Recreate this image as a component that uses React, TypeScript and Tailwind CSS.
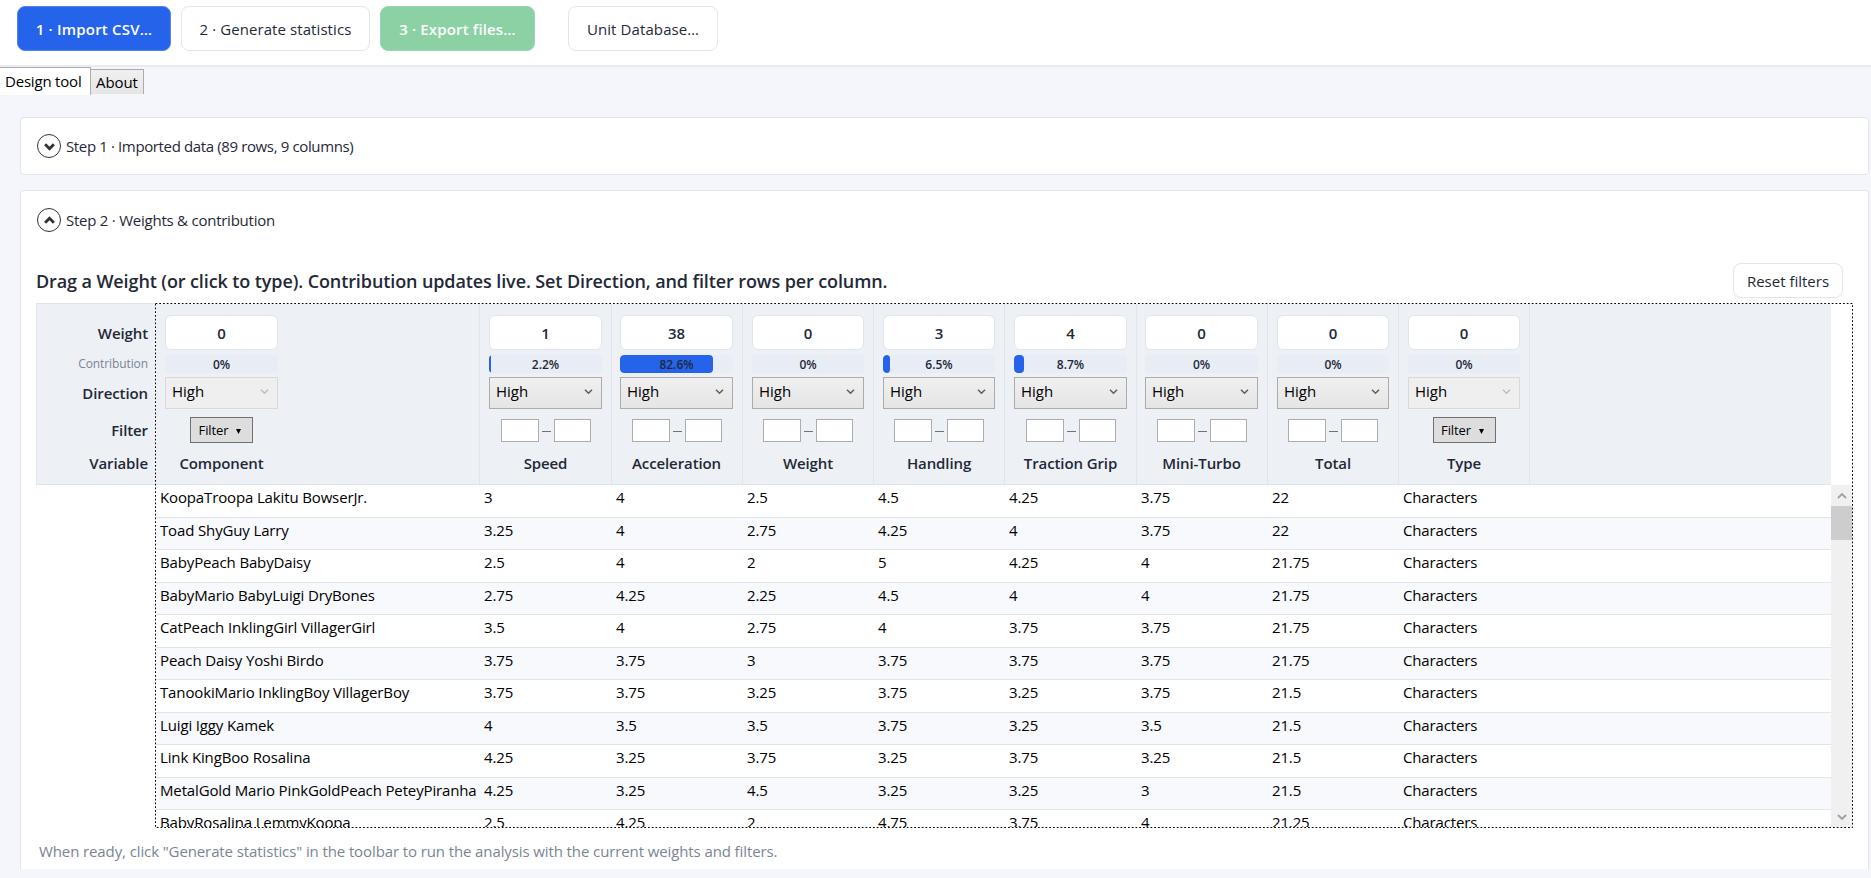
import type { ReactNode } from 'react'

interface Column {
  name: string
  weight: string
  share: number
  width: string
  inset: string
  box: string
  kind: 'range' | 'list'
}

const COLUMNS: Column[] = [
  { name: 'Component', weight: '0', share: 0, width: 'w-[324px]', inset: 'pl-[9px]', box: 'w-[113px]', kind: 'list' },
  { name: 'Speed', weight: '1', share: 2.2, width: 'w-[132px]', inset: 'pl-[9px]', box: 'w-[113px]', kind: 'range' },
  { name: 'Acceleration', weight: '38', share: 82.6, width: 'w-[131px]', inset: 'pl-2', box: 'w-[113px]', kind: 'range' },
  { name: 'Weight', weight: '0', share: 0, width: 'w-[131px]', inset: 'pl-[9px]', box: 'w-[112px]', kind: 'range' },
  { name: 'Handling', weight: '3', share: 6.5, width: 'w-[131px]', inset: 'pl-[9px]', box: 'w-[112px]', kind: 'range' },
  { name: 'Traction Grip', weight: '4', share: 8.7, width: 'w-[132px]', inset: 'pl-[9px]', box: 'w-[113px]', kind: 'range' },
  { name: 'Mini-Turbo', weight: '0', share: 0, width: 'w-[131px]', inset: 'pl-2', box: 'w-[113px]', kind: 'range' },
  { name: 'Total', weight: '0', share: 0, width: 'w-[131px]', inset: 'pl-[9px]', box: 'w-[112px]', kind: 'range' },
  { name: 'Type', weight: '0', share: 0, width: 'w-[131px]', inset: 'pl-[9px]', box: 'w-[112px]', kind: 'list' },
]

const ROWS: string[][] = [
  ['KoopaTroopa Lakitu BowserJr.', '3', '4', '2.5', '4.5', '4.25', '3.75', '22', 'Characters'],
  ['Toad ShyGuy Larry', '3.25', '4', '2.75', '4.25', '4', '3.75', '22', 'Characters'],
  ['BabyPeach BabyDaisy', '2.5', '4', '2', '5', '4.25', '4', '21.75', 'Characters'],
  ['BabyMario BabyLuigi DryBones', '2.75', '4.25', '2.25', '4.5', '4', '4', '21.75', 'Characters'],
  ['CatPeach InklingGirl VillagerGirl', '3.5', '4', '2.75', '4', '3.75', '3.75', '21.75', 'Characters'],
  ['Peach Daisy Yoshi Birdo', '3.75', '3.75', '3', '3.75', '3.75', '3.75', '21.75', 'Characters'],
  ['TanookiMario InklingBoy VillagerBoy', '3.75', '3.75', '3.25', '3.75', '3.25', '3.75', '21.5', 'Characters'],
  ['Luigi Iggy Kamek', '4', '3.5', '3.5', '3.75', '3.25', '3.5', '21.5', 'Characters'],
  ['Link KingBoo Rosalina', '4.25', '3.25', '3.75', '3.25', '3.75', '3.25', '21.5', 'Characters'],
  ['MetalGold Mario PinkGoldPeach PeteyPiranha', '4.25', '3.25', '4.5', '3.25', '3.25', '3', '21.5', 'Characters'],
  ['BabyRosalina LemmyKoopa', '2.5', '4.25', '2', '4.75', '3.75', '4', '21.25', 'Characters'],
]

function Chevron({ up, className }: { up?: boolean; className?: string }) {
  return (
    <svg viewBox="0 0 10 8" className={className} fill="none" stroke="currentColor">
      <path d={up ? 'M1 6 L5 2 L9 6' : 'M1 2 L5 6 L9 2'} />
    </svg>
  )
}

function ExpanderHeader({ open, children }: { open?: boolean; children: ReactNode }) {
  return (
    <div className="flex items-center gap-[5px]">
      <span className="flex size-6 items-center justify-center rounded-full border-[1.5px] border-[#333]">
        <Chevron up={open} className="h-[9px] w-[11px] stroke-[2.6] text-[#333]" />
      </span>
      <span className={`text-[15px] leading-5 text-[#1f2937] ${open ? 'tracking-[-0.24px]' : 'tracking-[-0.37px]'}`}>{children}</span>
    </div>
  )
}

function HeaderCell({ col }: { col: Column }) {
  const isList = col.kind === 'list'
  return (
    <div className={`${col.width} ${col.inset} h-full shrink-0 border-r border-[#e0e4ec] pt-[11px]`}>
      <div className={`${col.box} flex flex-col items-center`}>
        <div className="flex h-[35px] w-full items-center justify-center rounded-md border border-[#e1e5ec] bg-white pt-px text-[15px] font-semibold text-[#1f2937]">
          {col.weight}
        </div>
        <div className="relative mt-[5px] h-[18px] w-full overflow-hidden rounded bg-[#e8edf5]">
          <div className="h-full rounded bg-[#2563eb]" style={{ width: `${col.share}%` }} />
          <span className="absolute inset-0 text-center text-[12px] leading-[19px] font-semibold text-[#1f2937]">
            {col.share}%
          </span>
        </div>
        <div
          className={`mt-1 flex h-8 w-full items-center justify-between border pr-2 pl-[6px] text-[15px] text-black ${
            isList ? 'border-[#d9d9d9] bg-[#efefef]' : 'border-[#acacac] bg-linear-to-b from-[#f0f0f0] to-[#e5e5e5]'
          }`}
        >
          <span className="-mt-[3px]">High</span>
          <Chevron className={`-mt-[3px] h-[7px] w-[9px] stroke-[1.8] ${isList ? 'text-[#bfbfbf]' : 'text-[#606060]'}`} />
        </div>
        <div className="mt-2 flex h-[26px] items-center">
          {isList ? (
            <div className="flex h-[26px] w-[63px] items-center justify-center gap-2 border border-[#707070] bg-[#dddddd] pt-[2px] pr-[3px] text-[13px] tracking-[-0.1px] text-black">
              Filter
              <svg viewBox="0 0 6 6" className="size-[5px]"><path d="M0 0H6L3 6Z" /></svg>
            </div>
          ) : (
            <>
              <div className="h-[23px] w-[38px] border border-[#abadb3] bg-white" />
              <div className="mx-[3px] mt-[3px] h-px w-[9px] bg-[#6b7280]" />
              <div className="h-[23px] w-[37px] border border-[#abadb3] bg-white" />
            </>
          )}
        </div>
        <div className="mt-[10px] text-[15px] leading-5 font-semibold tracking-[-0.1px] whitespace-nowrap text-[#1f2937]">{col.name}</div>
      </div>
    </div>
  )
}

export default function App() {
  return (
    <div className="flex h-[878px] w-[1871px] flex-col overflow-hidden bg-[#f4f6fb] font-['Open_Sans',sans-serif]">
      {/* Toolbar */}
      <div className="flex h-[67px] shrink-0 border-b-2 border-[#e8ebf3] bg-white pt-[6px] pl-[17px] text-[15px] text-[#1f2937]">
        <div className="h-[45px] w-[154px] rounded-lg border border-[#5485ee] bg-[#2563eb] text-center leading-[45px] font-semibold tracking-[0.2px] text-white">1 · Import CSV…</div>
        <div className="ml-[10px] h-[45px] w-[189px] rounded-lg border border-[#e3e6ee] text-center leading-[45px] tracking-[0.08px]">2 · Generate statistics</div>
        <div className="ml-[10px] h-[45px] w-[155px] rounded-lg border border-[#9ad6b0] bg-[#8bd1a4] text-center leading-[45px] font-semibold tracking-[0.15px] text-white">3 · Export files…</div>
        <div className="ml-[33px] h-[45px] w-[150px] rounded-lg border border-[#e3e6ee] text-center leading-[45px] tracking-[0.1px]">Unit Database…</div>
      </div>

      {/* Tabs */}
      <div className="flex h-7 shrink-0 items-start text-[15px] text-black">
        <div className="h-7 w-[91px] border-t border-r border-[#acacac] bg-white pl-[5px] leading-[26px] tracking-[-0.2px]">Design tool</div>
        <div className="mt-[2px] h-[25px] w-[53px] border-t border-r border-[#acacac] bg-linear-to-b from-[#f0f0f0] to-[#e5e5e5] pl-[5px] leading-6 tracking-[-0.1px]">About</div>
      </div>

      <div className="mt-[22px] ml-5 flex h-[58px] w-[1849px] shrink-0 items-center rounded border border-[#e1e5ec] bg-white pl-4">
        <ExpanderHeader>Step 1 · Imported data (89 rows, 9 columns)</ExpanderHeader>
      </div>

      <div className="mt-[15px] ml-5 h-[679px] w-[1849px] shrink-0 rounded-t border border-b-0 border-[#e1e5ec] bg-white pt-[17px] pl-[15px]">
        <div className="pl-px">
          <ExpanderHeader open>Step 2 · Weights &amp; contribution</ExpanderHeader>
        </div>

        <div className="mt-[31px] flex h-[35px] items-center justify-between pr-[25px]">
          <h2 className="pt-[2px] text-[18px] font-semibold tracking-[-0.105px] text-[#1f2937]">
            Drag a Weight (or click to type). Contribution updates live. Set Direction, and filter rows per column.
          </h2>
          <div className="h-[35px] w-[110px] rounded-lg border border-[#e1e5f0] text-center text-[15px] leading-[34px] text-[#1f2937]">Reset filters</div>
        </div>

        <div className="mt-[5px] flex">
          {/* Row labels */}
          <div className="h-[182px] w-[119px] border border-r-0 border-[#e0e4ec] bg-[#edf0f5] pr-[7px] text-right text-[15px] leading-5 font-semibold tracking-[-0.1px] text-[#1f2937]">
            <div className="mt-[19px]">Weight</div>
            <div className="mt-[11px] text-[12px] font-normal text-[#7b8494]">Contribution</div>
            <div className="mt-[9px]">Direction</div>
            <div className="mt-[17px]">Filter</div>
            <div className="mt-[13px]">Variable</div>
          </div>

          <div className="relative flex h-[525px] w-[1698px] p-px">
            <div className="flex h-[523px] w-[1675px] flex-col overflow-hidden">
              <div className="flex h-[181px] shrink-0 border-b border-[#e0e4ec] bg-[#edf0f5]">
                {COLUMNS.map(col => <HeaderCell key={col.name} col={col} />)}
              </div>
              {ROWS.map((row, i) => (
                <div
                  key={row[0]}
                  className={`flex shrink-0 border-b border-[#e0e4ec] text-[15px] leading-[25px] tracking-[-0.14px] text-black ${i % 2 ? 'h-8 bg-[#f7f9fd]' : 'h-[33px] bg-white'}`}
                >
                  {row.map((cell, c) => (
                    <div key={c} className={`${COLUMNS[c].width} shrink-0 pl-1 whitespace-nowrap`}>{cell}</div>
                  ))}
                </div>
              ))}
            </div>
            {/* Scrollbar */}
            <div className="mt-[181px] flex h-[342px] w-[21px] flex-col items-center bg-[#f0f0f0]">
              <div className="flex h-[21px] items-center"><Chevron up className="h-2 w-[10px] stroke-[1.8] text-[#a0a0a0]" /></div>
              <div className="h-[34px] w-full bg-[#cdcdcd]" />
              <div className="mt-auto flex h-[21px] items-center"><Chevron className="h-2 w-[10px] stroke-[1.8] text-[#a0a0a0]" /></div>
            </div>
            {/* Focus rectangle */}
            <svg className="pointer-events-none absolute inset-0 size-full" fill="none" stroke="#000">
              <rect x="0.5" y="0.5" width="1697" height="524" strokeDasharray="1.75 2" />
            </svg>
          </div>
        </div>

        <p className="mt-3 ml-[3px] text-[15px] leading-[22px] tracking-[-0.107px] text-[#7b8494]">
          When ready, click "Generate statistics" in the toolbar to run the analysis with the current weights and filters.
        </p>
      </div>
    </div>
  )
}
